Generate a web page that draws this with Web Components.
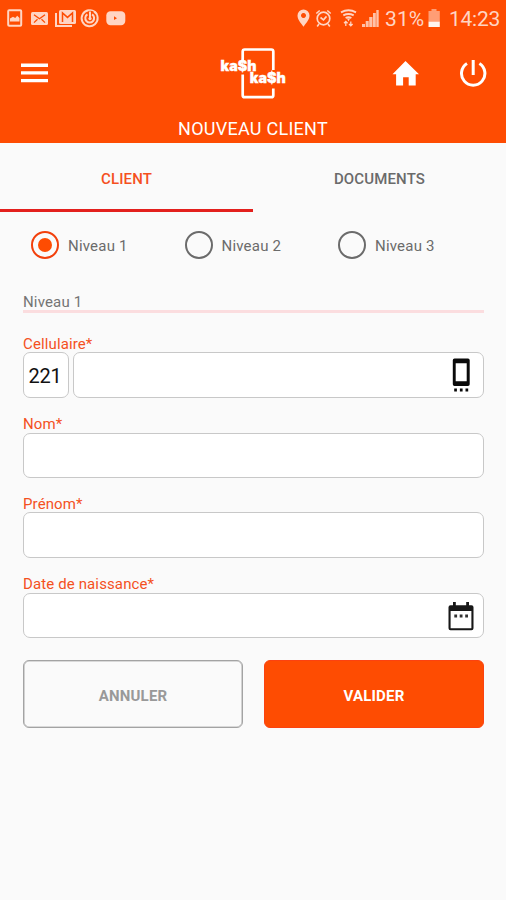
<!DOCTYPE html>
<html lang="fr">
<head>
<meta charset="utf-8">
<title>Nouveau client</title>
<style>
html,body{margin:0;height:100%;background:#fafafa}
body{font-family:Roboto,"Liberation Sans",sans-serif;overflow:hidden}
</style>
</head>
<body>
<kash-app></kash-app>
<script>
const define = (name, html) => customElements.define(name, class extends HTMLElement {
  constructor() {
    super();
    const t = document.createElement('template');
    t.innerHTML = html;
    this.attachShadow({mode: 'open'}).append(t.content.cloneNode(true));
  }
});

define('status-bar', `<style>
:host{display:flex;justify-content:space-between;height:37px;color:#ffd5c4;font-size:21px;line-height:38px}
svg{display:block;flex:none}
.right{display:flex;padding-right:7px}
.pct{width:41px;letter-spacing:.1px;white-space:nowrap}
.time{width:50px;margin-left:8px;letter-spacing:-.25px;white-space:nowrap}
</style>
<svg width="130" height="37" viewBox="0 0 130 37" fill="none" stroke="#ffd5c4">
  <rect x="8.2" y="10.2" width="13" height="15.6" rx="1" stroke-width="2"/>
  <path d="M10 21.5v-3l3-1.8 2.2 1.2 2-2.2 2.3 2.4v3.4z" fill="#ffd5c4" stroke="none"/>
  <rect x="31" y="12" width="17" height="13" rx="1.5" fill="#ffd5c4" stroke="none"/>
  <path d="M34 14.8l5.500 4 5.500-4M34 22.600l3.500-3.300M45 22.600l-3.500-3.300" stroke="#fe4c02" stroke-width="1.300"/>
  <path d="M56 13v13h16" stroke-width="2"/>
  <rect x="59" y="10" width="17" height="14" rx="1.5" fill="#ffd5c4" stroke="none"/>
  <path d="M62.500 22V13l5 4.400 5-4.400v9" stroke="#fe4c02" stroke-width="1.500"/>
  <path d="M88.500 10.300a8 8 0 1 0 5.500 1.200" stroke-width="2"/>
  <path d="M88 10.300a8 8 0 0 1 9 4" stroke-width="1.600"/>
  <path d="M87.400 14.400a4.400 4.400 0 1 0 4.600 0M90 11.500v7" stroke-width="2"/>
  <circle cx="90" cy="18.600" r="1.600" fill="#ffd5c4" stroke="none"/>
  <rect x="106.300" y="11.200" width="19" height="14" rx="4.200" fill="#ffd5c4" stroke="none"/>
  <path d="M114 16.300v3.800l3-1.900z" fill="#fe4c02" stroke="none"/>
</svg>
<div class="right">
<svg width="90" height="37" viewBox="295 0 90 37" fill="none" stroke="#ffd5c4">
  <path d="M303.500 26.800c-3.400-4.500-6-7.500-6-11.200a6 6 0 0 1 12 0c0 3.700-2.600 6.700-6 11.200zM303.500 13a2.500 2.500 0 1 0 .01 0z" fill="#ffd5c4" fill-rule="evenodd" stroke="none"/>
  <circle cx="323.500" cy="18.500" r="6.300" stroke-width="1.700"/>
  <path d="M316.300 13.500l3.400-3M330.700 13.500l-3.400-3M319 24l-1.800 2.500M328 24l1.800 2.500M320.500 17.500l3 2.300 3-3.400" stroke-width="1.600"/>
  <path d="M341 12.300q7.500-4 15 0M343.300 15.300q5.200-2.700 10.400 0M345.600 18q2.900-1.500 5.800 0" stroke-width="1.900"/>
  <path d="M347 18.500h3l-1.500 3z" fill="#ffd5c4" stroke="none"/>
  <path d="M345.800 26v-4M344 23.200l1.800-1.800 1.800 1.800M350.800 21.500v4M349 24l1.800 1.800 1.800-1.800" stroke-width="1.300"/>
  <path d="M362 24h3v3h-3zM365.700 21h3v6h-3zM369.200 17h3.300v10h-3.300zM373 13h2.800v14H373zM376.300 10h2.400v17h-2.400z" fill="#ffc1a8" stroke="none"/>
</svg>
<span class="pct">31%</span>
<svg width="15" height="37" viewBox="426 0 15 37"><path d="M431.500 9h5v2h3.300v10.500H428.500V11h3z" fill="#ff9d75"/><path d="M428.500 21.500h11.300v5.500h-11.300z" fill="#fff3ed"/></svg>
<span class="time">14:23</span>
</div>`);

define('kash-logo', `<style>:host{display:block;width:70px;height:54px}svg{display:block}
text{font-family:Inter,Roboto,sans-serif;font-weight:900;font-size:14px;fill:#fff;stroke:#fff;stroke-width:.3px}</style>
<svg width="70" height="54" viewBox="218 46 70 54">
  <path d="M242.700 60v-8.500q0-2 2-2h26.600q2 0 2 2V70M242.700 74.500v20.700q0 2 2 2h26.600q2 0 2-2V88.500" fill="none" stroke="#fff" stroke-width="2.700"/>
  <text x="220.500" y="70.500" textLength="36" lengthAdjust="spacingAndGlyphs">ka$h</text>
  <text x="249.800" y="83.300" textLength="36" lengthAdjust="spacingAndGlyphs">ka$h</text>
</svg>`);

define('tool-bar', `<style>
:host{display:grid;grid-template-columns:1fr 70px 1fr;align-items:center;height:72px;padding:0 19px}
svg{display:block}.end{display:flex;justify-content:flex-end;gap:39px}
</style>
<svg width="30" height="30" viewBox="0 0 30 30" fill="#fff"><path d="M2 5.600h27v3.400H2zM2 13.200h27v3.400H2zM2 20.900h27v3.400H2z"/></svg>
<kash-logo></kash-logo>
<div class="end">
<svg width="28" height="28" viewBox="0 0 28 28"><path d="M13.500 2L27 15.200h-3.300V26.400h-7v-8.200h-5.600v8.200h-7V15.200H.5z" fill="#fff"/></svg>
<svg width="28" height="28" viewBox="0 0 28 28" fill="none" stroke="#fff" stroke-width="3"><path d="M14.200 1v15M8 4.600a11.700 11.700 0 1 0 12.400 0"/></svg>
</div>`);

define('app-header', `<style>
:host{display:flex;flex-direction:column;height:143px;background:#fe4c02;color:#fff}
h1{margin:0;text-align:center;font-size:18px;font-weight:400;line-height:22px;padding-top:9px;letter-spacing:.27px}
</style><status-bar></status-bar><tool-bar></tool-bar><h1><slot></slot></h1>`);

define('tab-item', `<style>
:host{flex:1;box-sizing:border-box;height:69px;display:flex;align-items:center;justify-content:center;color:#6a6a6a;font-size:15px;font-weight:500;letter-spacing:.15px;border-bottom:3px solid transparent;padding-top:5px}
:host([selected]){color:#f5501e;border-color:#e3201d}
</style><slot></slot>`);

define('radio-item', `<style>
:host{display:flex;align-items:center;gap:9px;width:153.500px;color:#6b6b6b;font-size:15px;letter-spacing:.2px}
i{box-sizing:border-box;width:28px;height:28px;border:2.600px solid #6b6b6b;border-radius:50%;display:grid;place-items:center}
:host([checked]) i{border-color:#f2400c}
:host([checked]) i::after{content:"";width:14px;height:14px;border-radius:50%;background:#fe4c02}
span{padding-top:2px}
</style><i></i><span><slot></slot></span>`);

define('section-title', `<style>
:host{display:block;box-sizing:border-box;height:22px;line-height:22px;border-bottom:3px solid #fbdddf;color:#747474;font-size:15px;letter-spacing:.15px}
</style><slot></slot>`);

define('input-box', `<style>
:host{box-sizing:border-box;flex:1;height:100%;border:1.500px solid #c8c8c8;border-radius:7px;background:#fff;display:flex;align-items:center;justify-content:flex-end;padding-right:8px;font-size:20px;color:#111}
:host([prefix]){flex:none;width:46px;justify-content:center;padding:1px 2px 0 0;letter-spacing:-.2px}
</style><slot></slot>`);

define('form-field', `<style>
:host{box-sizing:border-box;display:block;height:80px}
:host([lower]){padding-top:1px}
label{display:block;height:17px;line-height:18px;font-size:15px;color:#f4511e;letter-spacing:.12px;white-space:nowrap}
div{display:flex;gap:4px;height:46px}
:host([lower]) label{line-height:17px}
:host([lower]) div{height:45px}
</style><label><slot name="label"></slot></label><div><slot></slot></div>`);

define('action-button', `<style>
:host{box-sizing:border-box;flex:1;height:68px;border:1px solid #a3a3a3;box-shadow:inset 0 0 0 .6px #b8b8b8;border-radius:6px;display:flex;align-items:center;justify-content:center;padding-top:3px;font-size:15px;font-weight:700;letter-spacing:.2px;color:#999}
:host([primary]){background:#fe4c02;border-color:#fb4210;box-shadow:none;color:#fff}
</style><slot></slot>`);

define('kash-app', `<style>
:host{display:block;width:506px;height:900px;background:#fafafa}
nav{display:flex}
.radios{display:flex;padding-left:31px;height:66px;align-items:center}
main{padding:13px 22px 0 23px}
section-title{margin-bottom:22px}
.actions{display:flex;gap:21px;margin-top:5px}
svg{display:block}
</style>
<app-header>NOUVEAU CLIENT</app-header>
<nav><tab-item selected>CLIENT</tab-item><tab-item>DOCUMENTS</tab-item></nav>
<div class="radios"><radio-item checked>Niveau 1</radio-item><radio-item>Niveau 2</radio-item><radio-item>Niveau 3</radio-item></div>
<main>
<section-title>Niveau 1</section-title>
<form-field><span slot="label">Cellulaire*</span><input-box prefix>221</input-box><input-box>
<svg width="28" height="38" viewBox="0 0 28 38" fill="#0a0a0a"><path fill-rule="evenodd" d="M7.500 2.500h13.500q1.700 0 1.700 1.700v24q0 1.700-1.700 1.700H7.500q-1.700 0-1.700-1.700v-24q0-1.700 1.700-1.700zM8.700 7.300v18h11V7.300z"/><path d="M7.200 32.500h2.700v3H7.200zM12.900 32.500h2.700v3h-2.700zM18.500 32.500h2.700v3h-2.700z"/></svg></input-box></form-field>
<form-field lower><span slot="label">Nom*</span><input-box></input-box></form-field>
<form-field><span slot="label">Prénom*</span><input-box></input-box></form-field>
<form-field lower><span slot="label">Date de naissance*</span><input-box>
<svg width="28" height="32" viewBox="0 0 28 32"><path fill="#171717" fill-rule="evenodd" d="M6 2h2.800v3.300h10.400V2H22v3.300h2.500q2 0 2 2v21q0 2-2 2h-21q-2 0-2-2v-21q0-2 2-2H6zM3.600 11v17.200h20.800V11z"/><path fill="#333" d="M7.300 14.500h2.800v3H7.300zM12.700 14.500h2.800v3h-2.800zM18.200 14.500H21v3h-2.800z"/></svg></input-box></form-field>
<div class="actions"><action-button>ANNULER</action-button><action-button primary>VALIDER</action-button></div>
</main>`);
</script>
</body>
</html>
